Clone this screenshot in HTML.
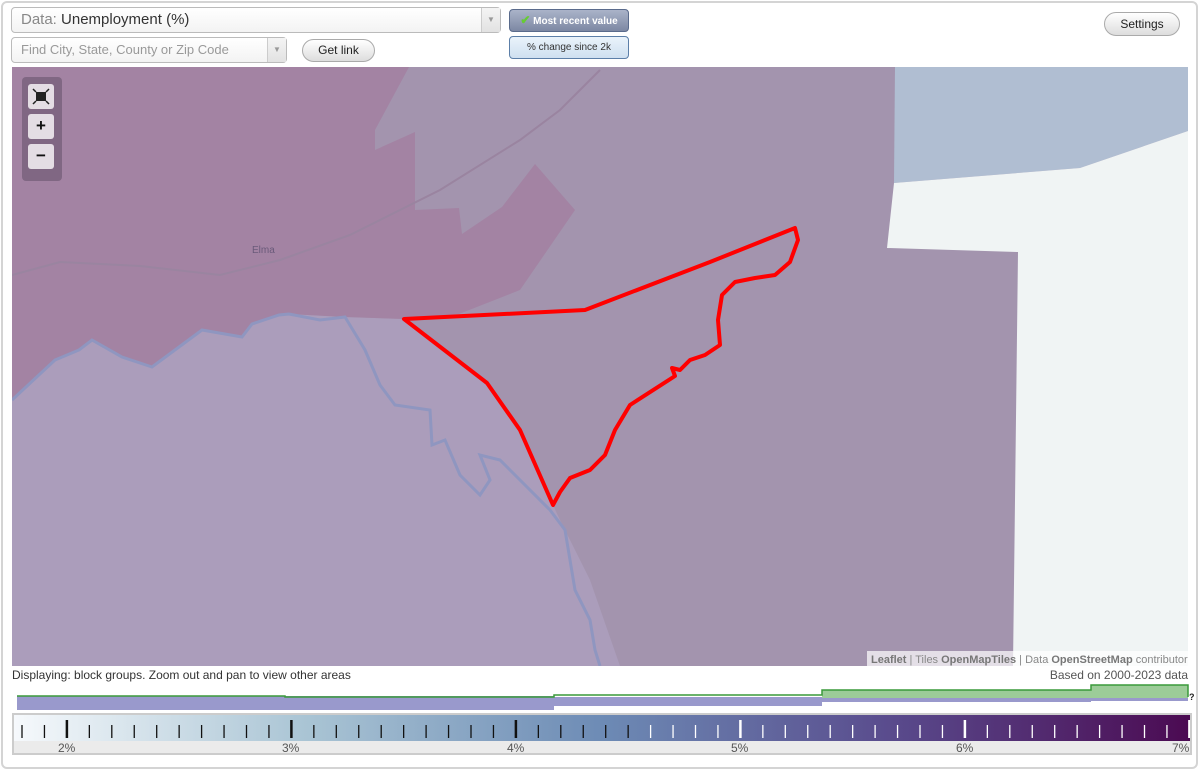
<!DOCTYPE html>
<html><head><meta charset="utf-8">
<style>
*{box-sizing:border-box;margin:0;padding:0}
body{width:1200px;height:771px;background:#fff;font-family:"Liberation Sans",sans-serif;position:relative;overflow:hidden}
.frame{position:absolute;left:1px;top:1px;width:1197px;height:768px;border:2px solid #d4d4d4;border-radius:6px}
.sel{position:absolute;border:1px solid #bbb;border-radius:4px;background:linear-gradient(#fff,#f3f3f3);color:#888;}
.arr{position:absolute;right:0;top:0;bottom:0;width:19px;border-left:1px solid #ccc;background:linear-gradient(#f4f4f4,#e2e2e2);color:#999;font-size:8px;text-align:center}
.btn{position:absolute;border:1px solid #aaa;border-radius:12px;background:linear-gradient(#fff,#ddd);font-size:12px;text-align:center;color:#222}
.tb{position:absolute;left:509px;width:120px;border:1px solid #5c7fa8;border-radius:4px;font-size:10px;text-align:center}
.ctl{position:absolute;left:22px;top:77px;width:40px;height:104px;background:rgba(100,80,105,0.55);border-radius:4px}
.cb{position:absolute;left:6px;width:26px;height:25px;background:#e4dde4;border-radius:3px;text-align:center;font-weight:bold;font-size:17px;line-height:24px;color:#111}
</style></head><body>
<div class="frame"></div>
<div class="sel" style="left:11px;top:7px;width:490px;height:26px;font-size:15px;line-height:24px;padding-left:9px"><span style="color:#888">Data:</span> <span style="color:#333">Unemployment (%)</span><div class="arr" style="line-height:24px">▼</div></div>
<div class="sel" style="left:11px;top:37px;width:276px;height:26px;font-size:13px;line-height:24px;padding-left:9px;color:#999">Find City, State, County or Zip Code<div class="arr" style="line-height:24px">▼</div></div>
<div class="btn" style="left:302px;top:39px;width:73px;height:23px;line-height:21px">Get link</div>
<div class="tb" style="top:9px;height:23px;line-height:21px;background:linear-gradient(#aab3c9,#7d88a3);color:#fff;font-weight:bold;border-color:#5a6b8c"><span style="color:#6c3;font-size:12px">✔</span> Most recent value</div>
<div class="tb" style="top:36px;height:23px;line-height:21px;background:linear-gradient(#eaf3fb,#cfe0f0);color:#333">% change since 2k</div>
<div class="btn" style="left:1104px;top:12px;width:76px;height:24px;line-height:22px">Settings</div>

<svg style="position:absolute;left:12px;top:67px" width="1176" height="599" viewBox="12 67 1176 599">
<rect x="12" y="67" width="1176" height="599" fill="#a394ae"/>
<polygon points="12,400 55,360 79,350 92,340 122,357 152,367 202,330 242,337 252,324 279,315 289,314 345,317 404,319 487,383 520,430 553,505 560,520 590,580 620,666 12,666" fill="#ab9dbb"/>
<polygon points="12,67 409,67 375,130 375,150 415,132 415,210 459,208 462,234 502,207 535,164 575,210 520,290 459,314 404,319 345,317 289,314 279,315 252,324 242,337 202,330 152,367 122,357 92,340 79,350 55,360 12,400" fill="#a383a3"/>
<polyline points="12,400 55,360 79,350 92,340 122,357 152,367 202,330 242,337 252,324 279,315 289,314 320,320 345,317 365,350 380,385 395,405 430,410 432,445 445,440 460,475 480,495 490,480 480,455 500,460 510,470 550,510 565,530 570,560 575,590 590,620 595,650 600,666" fill="none" stroke="#8f96c0" stroke-width="3"/>
<polyline points="12,275 60,262 140,266 220,275 280,260 350,235 440,190 520,140 560,110 600,70" fill="none" stroke="#9a84a0" stroke-width="2"/>
<polygon points="895,67 1188,67 1188,131 1080,168 894,183" fill="#b0bed2"/>
<polygon points="894,183 1080,168 1188,131 1188,666 1013,666 1018,252 887,248" fill="#f0f4f4"/>
<polygon points="404,319 585,310 710,262 795,228 798,240 790,262 775,275 755,278 735,282 722,295 718,320 720,345 705,355 690,360 680,370 672,368 675,376 630,405 615,430 605,455 590,470 570,478 560,492 553,505 520,430 487,383" fill="none" stroke="#ff0000" stroke-width="4" stroke-linejoin="round"/>
<text x="252" y="253" font-size="10" fill="#6a5a7a" font-family="Liberation Sans">Elma</text>
<rect x="867" y="651" width="321" height="15" fill="rgba(255,255,255,0.7)"/>
<text x="871" y="663" font-size="11" fill="#888" font-family="Liberation Sans"><tspan font-weight="bold" fill="#777">Leaflet</tspan> | Tiles <tspan font-weight="bold" fill="#777">OpenMapTiles</tspan> | Data <tspan font-weight="bold" fill="#777">OpenStreetMap</tspan> contributors</text>
</svg>
<div class="ctl">
<div class="cb" style="top:7px"><svg width="26" height="25" viewBox="0 0 26 25"><rect x="8" y="8" width="10" height="9" fill="#222"/><path d="M5 5l3 3M21 5l-3 3M5 20l3-3M21 20l-3-3" stroke="#222" stroke-width="1.5"/></svg></div>
<div class="cb" style="top:37px">+</div><div class="cb" style="top:67px">−</div></div>

<div style="position:absolute;left:12px;top:668px;font-size:12px;color:#333">Displaying: block groups. Zoom out and pan to view other areas</div>
<div style="position:absolute;right:12px;top:668px;font-size:12px;color:#555">Based on 2000-2023 data</div>

<svg style="position:absolute;left:0;top:680px" width="1200" height="34">
<rect x="17" y="16" width="537" height="14" fill="#9999cc"/>
<rect x="554" y="17" width="268" height="9" fill="#9999cc"/>
<rect x="822" y="18" width="269" height="4" fill="#9999cc"/>
<rect x="1091" y="18" width="97" height="3" fill="#9999cc"/>
<rect x="822" y="10" width="366" height="8" fill="#9ccc98"/>
<rect x="1091" y="5" width="97" height="6" fill="#9ccc98"/>
<polyline points="17,16 285,16 285,17 554,17 554,15 822,15 822,10 1091,10 1091,5 1188,5 1188,17" fill="none" stroke="#3a9a3a" stroke-width="1.5"/>
<text x="1189" y="20" font-size="9" font-weight="bold" fill="#222">?</text>
</svg>

<div style="position:absolute;left:12px;top:713px;width:1180px;height:42px;border:2px solid #ccc;background:#ebebeb">
<div style="position:absolute;left:0;top:0;right:0;height:26px;background:linear-gradient(to right,#f6f9fc,#a9c4d4 25%,#6d8bb5 50%,#594a8c 75%,#4b0a52)"></div>
<svg style="position:absolute;left:-14px;top:0" width="1190" height="26" id="t"></svg>
<div style="position:absolute;left:44px;top:26px;font-size:12px;color:#555">2%</div>
<div style="position:absolute;left:268px;top:26px;font-size:12px;color:#555">3%</div>
<div style="position:absolute;left:493px;top:26px;font-size:12px;color:#555">4%</div>
<div style="position:absolute;left:717px;top:26px;font-size:12px;color:#555">5%</div>
<div style="position:absolute;left:942px;top:26px;font-size:12px;color:#555">6%</div>
<div style="position:absolute;left:1158px;top:26px;font-size:12px;color:#555">7%</div>
</div>
<script>
var s=document.getElementById('t'),h='';
for(var i=0;i<=52;i++){var x=22+i*22.45;var maj=(i-2)%10==0;var c=x>650?'#fff':'#111';
h+='<line x1="'+x+'" x2="'+x+'" y1="'+(maj?5:10)+'" y2="23" stroke="'+c+'" stroke-width="'+(maj?2.5:1.3)+'"/>';}
s.innerHTML=h;
</script>
</body></html>
